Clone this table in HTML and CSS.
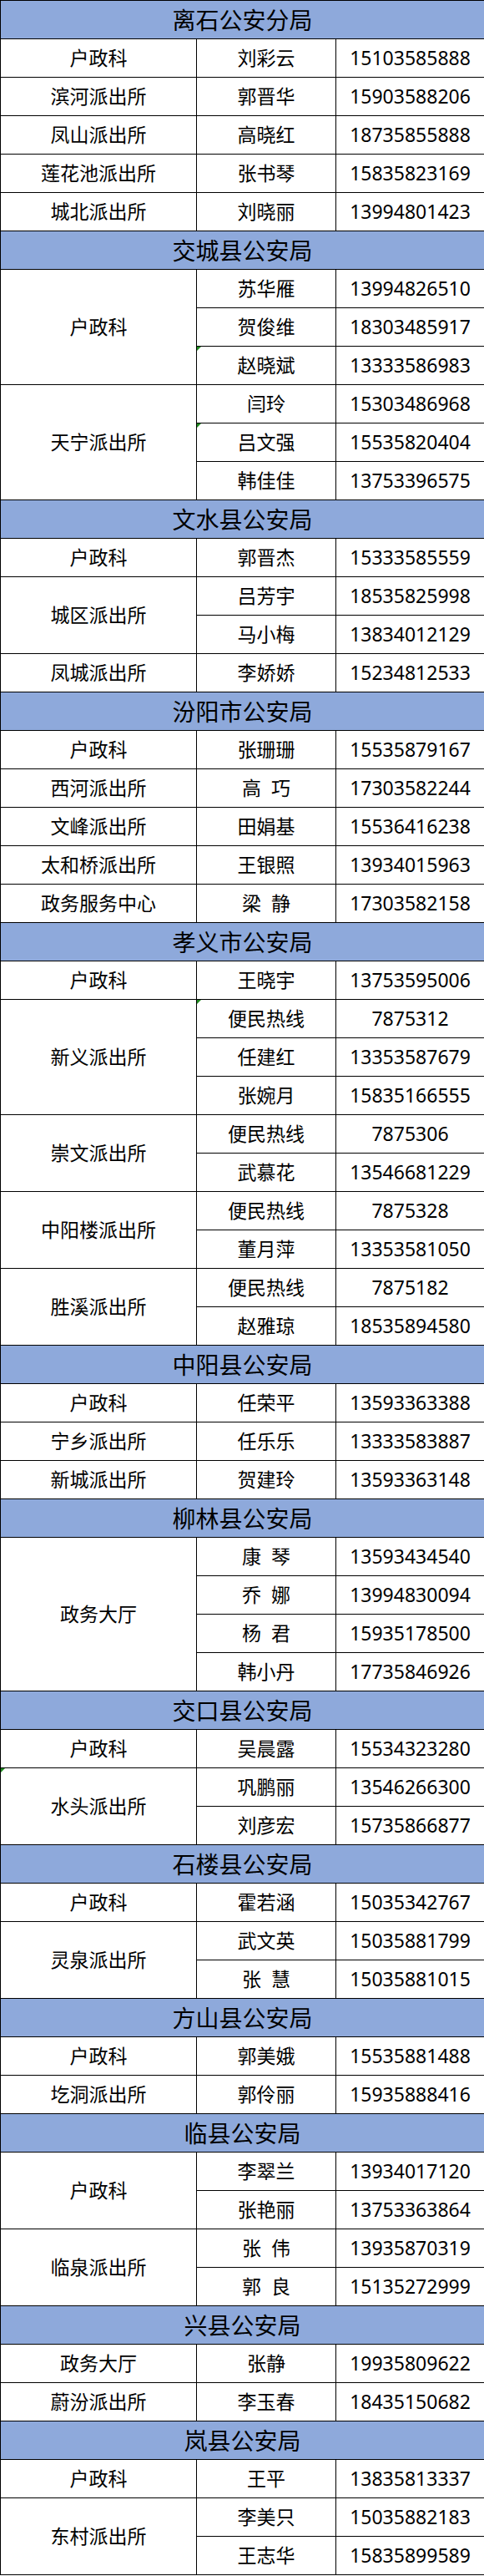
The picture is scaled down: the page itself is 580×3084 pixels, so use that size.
FILE: index.html
```html
<!DOCTYPE html>
<html lang="zh-CN">
<head>
<meta charset="utf-8">
<title>吕梁市公安局户政联系表</title>
<link rel="stylesheet" href="styles.css">
</head>
<body>
<table class="sheet">
<colgroup><col class="c-unit"><col class="c-name"><col class="c-tel"></colgroup>
<tbody>
<tr class="hd"><td colspan="3">离石公安分局</td></tr>
<tr><td>户政科</td><td>刘彩云</td><td>15103585888</td></tr>
<tr><td>滨河派出所</td><td>郭晋华</td><td>15903588206</td></tr>
<tr><td>凤山派出所</td><td>高晓红</td><td>18735855888</td></tr>
<tr><td>莲花池派出所</td><td>张书琴</td><td>15835823169</td></tr>
<tr><td>城北派出所</td><td>刘晓丽</td><td>13994801423</td></tr>

<tr class="hd"><td colspan="3">交城县公安局</td></tr>
<tr><td rowspan="3">户政科</td><td>苏华雁</td><td>13994826510</td></tr>
<tr><td>贺俊维</td><td>18303485917</td></tr>
<tr><td class="mark">赵晓斌</td><td>13333586983</td></tr>
<tr><td rowspan="3">天宁派出所</td><td>闫玲</td><td>15303486968</td></tr>
<tr><td class="mark">吕文强</td><td>15535820404</td></tr>
<tr><td>韩佳佳</td><td>13753396575</td></tr>

<tr class="hd"><td colspan="3">文水县公安局</td></tr>
<tr><td>户政科</td><td>郭晋杰</td><td>15333585559</td></tr>
<tr><td rowspan="2">城区派出所</td><td>吕芳宇</td><td>18535825998</td></tr>
<tr><td>马小梅</td><td>13834012129</td></tr>
<tr><td>凤城派出所</td><td>李娇娇</td><td>15234812533</td></tr>

<tr class="hd"><td colspan="3">汾阳市公安局</td></tr>
<tr><td>户政科</td><td>张珊珊</td><td>15535879167</td></tr>
<tr><td>西河派出所</td><td>高&nbsp;&nbsp;巧</td><td>17303582244</td></tr>
<tr><td>文峰派出所</td><td>田娟基</td><td>15536416238</td></tr>
<tr><td>太和桥派出所</td><td>王银照</td><td>13934015963</td></tr>
<tr><td>政务服务中心</td><td>梁&nbsp;&nbsp;静</td><td>17303582158</td></tr>

<tr class="hd"><td colspan="3">孝义市公安局</td></tr>
<tr><td>户政科</td><td>王晓宇</td><td>13753595006</td></tr>
<tr><td rowspan="3">新义派出所</td><td class="mark">便民热线</td><td>7875312</td></tr>
<tr><td>任建红</td><td>13353587679</td></tr>
<tr><td>张婉月</td><td>15835166555</td></tr>
<tr><td rowspan="2">崇文派出所</td><td>便民热线</td><td>7875306</td></tr>
<tr><td>武慕花</td><td>13546681229</td></tr>
<tr><td rowspan="2">中阳楼派出所</td><td>便民热线</td><td>7875328</td></tr>
<tr><td>董月萍</td><td>13353581050</td></tr>
<tr><td rowspan="2">胜溪派出所</td><td>便民热线</td><td>7875182</td></tr>
<tr><td>赵雅琼</td><td>18535894580</td></tr>

<tr class="hd"><td colspan="3">中阳县公安局</td></tr>
<tr><td>户政科</td><td>任荣平</td><td>13593363388</td></tr>
<tr><td>宁乡派出所</td><td>任乐乐</td><td>13333583887</td></tr>
<tr><td>新城派出所</td><td>贺建玲</td><td>13593363148</td></tr>

<tr class="hd"><td colspan="3">柳林县公安局</td></tr>
<tr><td rowspan="4">政务大厅</td><td>康&nbsp;&nbsp;琴</td><td>13593434540</td></tr>
<tr><td>乔&nbsp;&nbsp;娜</td><td>13994830094</td></tr>
<tr><td>杨&nbsp;&nbsp;君</td><td>15935178500</td></tr>
<tr><td>韩小丹</td><td>17735846926</td></tr>

<tr class="hd"><td colspan="3">交口县公安局</td></tr>
<tr><td>户政科</td><td>吴晨露</td><td>15534323280</td></tr>
<tr><td rowspan="2" class="mark">水头派出所</td><td>巩鹏丽</td><td>13546266300</td></tr>
<tr><td>刘彦宏</td><td>15735866877</td></tr>

<tr class="hd"><td colspan="3">石楼县公安局</td></tr>
<tr><td>户政科</td><td>霍若涵</td><td>15035342767</td></tr>
<tr><td rowspan="2">灵泉派出所</td><td>武文英</td><td>15035881799</td></tr>
<tr><td>张&nbsp;&nbsp;慧</td><td>15035881015</td></tr>

<tr class="hd"><td colspan="3">方山县公安局</td></tr>
<tr><td>户政科</td><td>郭美娥</td><td>15535881488</td></tr>
<tr><td>圪洞派出所</td><td>郭伶丽</td><td>15935888416</td></tr>

<tr class="hd"><td colspan="3">临县公安局</td></tr>
<tr><td rowspan="2">户政科</td><td>李翠兰</td><td>13934017120</td></tr>
<tr><td>张艳丽</td><td>13753363864</td></tr>
<tr><td rowspan="2">临泉派出所</td><td>张&nbsp;&nbsp;伟</td><td>13935870319</td></tr>
<tr><td>郭&nbsp;&nbsp;良</td><td>15135272999</td></tr>

<tr class="hd"><td colspan="3">兴县公安局</td></tr>
<tr><td>政务大厅</td><td>张静</td><td>19935809622</td></tr>
<tr><td>蔚汾派出所</td><td>李玉春</td><td>18435150682</td></tr>

<tr class="hd"><td colspan="3">岚县公安局</td></tr>
<tr><td>户政科</td><td>王平</td><td>13835813337</td></tr>
<tr><td rowspan="2">东村派出所</td><td>李美只</td><td>15035882183</td></tr>
<tr><td>王志华</td><td>15835899589</td></tr>
</tbody>
</table>
</body>
</html>
```

FILE: styles.css
```css
html, body {
  margin: 0;
  padding: 0;
  background: #ffffff;
}

.sheet {
  width: 580px;
  border-collapse: collapse;
  table-layout: fixed;
  font-family: "Noto Sans", "Noto Sans CJK SC", sans-serif;
  color: #000000;
}

.c-unit { width: 235px; }
.c-name { width: 167px; }
.c-tel  { width: 178px; }

.sheet tr {
  height: 46px;
}

.sheet td {
  border: 1px solid #000000;
  padding: 0;
  text-align: center;
  vertical-align: middle;
  font-size: 23px;
  line-height: 1;
  white-space: nowrap;
  position: relative;
}

.sheet .hd td {
  background: #8ea9db;
  font-size: 28px;
}

.sheet td.mark::before {
  content: "";
  position: absolute;
  left: 0;
  top: 0;
  width: 0;
  height: 0;
  border-top: 5px solid #1f8a1f;
  border-right: 5px solid transparent;
}
```
